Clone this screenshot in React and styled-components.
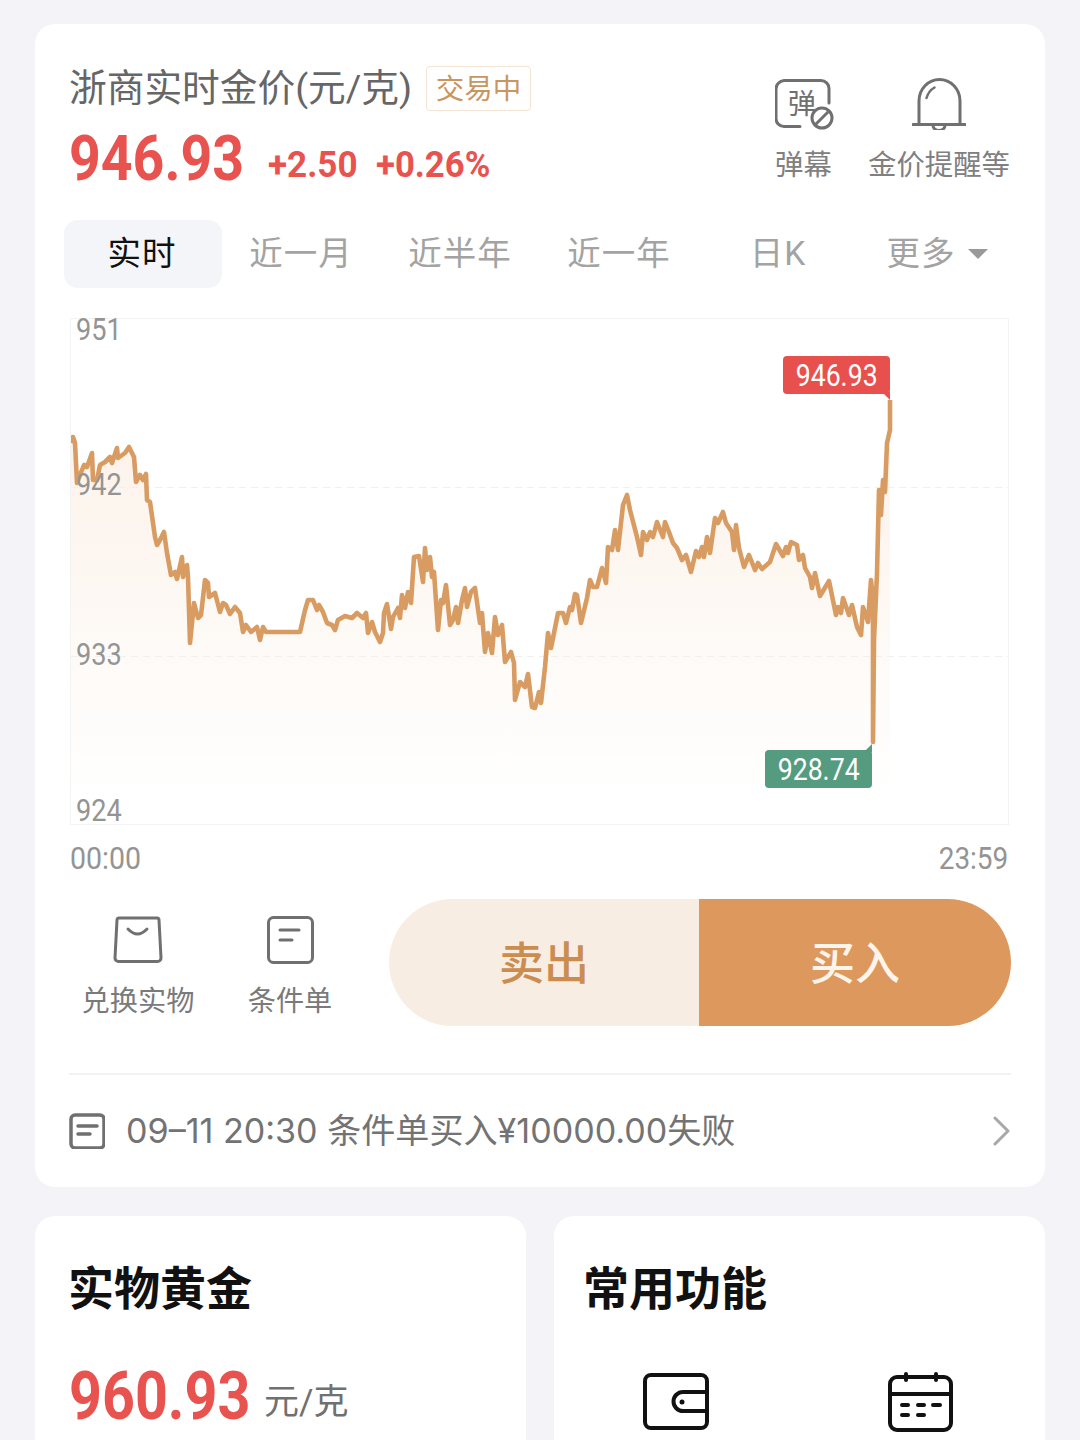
import styled, { createGlobalStyle } from "styled-components"

const GlobalStyle = createGlobalStyle`
html, body {
  margin: 0;
  padding: 0;
  height: 1440px;
  overflow: hidden;
  background: #f3f3f8;
  font-family: "Roboto", "Noto Sans CJK SC", sans-serif;
}
`

const CJK = `"Roboto", "Noto Sans CJK SC", sans-serif`

// 分时线 (page coordinates)
const line = [
  [71,443],[73,437],[75,443],[77,483],[80,475],[84,465],[87,467],[92,453],[93,480],[97,480],[100,465],[105,462],[110,457],[112,463],[117,448],[118,458],[125,453],[129,447],[134,457],[136,482],[140,475],[143,480],[146,474],[147,500],[150,502],[155,537],[157,545],[160,540],[164,532],[167,553],[171,575],[175,572],[177,579],[182,557],[183,577],[187,565],[188,577],[190,643],[194,603],[198,618],[201,615],[205,580],[208,583],[209,597],[215,593],[220,612],[223,603],[226,605],[230,614],[235,607],[240,613],[243,632],[246,625],[251,632],[257,627],[260,640],[263,627],[266,632],[300,632],[305,610],[308,600],[313,600],[317,610],[319,605],[323,612],[327,623],[332,625],[335,630],[338,620],[345,616],[352,618],[357,613],[363,618],[366,613],[368,633],[372,622],[375,632],[380,642],[383,633],[384,613],[387,604],[391,629],[393,617],[398,608],[400,618],[402,595],[405,608],[408,592],[411,603],[414,557],[419,556],[423,582],[425,548],[427,570],[430,557],[432,577],[434,572],[438,630],[441,600],[443,603],[446,585],[450,625],[453,620],[456,607],[458,623],[462,600],[465,588],[467,607],[471,592],[475,588],[480,623],[482,613],[485,652],[488,633],[492,653],[495,617],[498,635],[502,625],[505,662],[511,652],[514,663],[515,700],[520,682],[525,687],[528,674],[532,707],[535,708],[539,692],[541,703],[545,667],[548,633],[551,648],[558,613],[563,613],[566,623],[570,607],[572,610],[575,594],[577,595],[581,623],[587,598],[590,580],[593,587],[597,587],[602,568],[606,583],[608,547],[612,550],[615,530],[618,550],[623,505],[627,495],[630,510],[637,537],[641,555],[643,532],[647,540],[650,532],[653,537],[657,522],[663,537],[665,522],[669,532],[673,543],[677,548],[682,560],[686,555],[691,572],[696,551],[699,557],[702,547],[704,557],[707,537],[710,553],[715,518],[718,523],[723,512],[726,523],[732,532],[734,550],[736,525],[739,548],[744,567],[749,555],[755,570],[758,563],[762,569],[770,562],[776,544],[783,556],[786,547],[788,553],[791,542],[797,545],[799,560],[803,555],[805,568],[810,577],[812,588],[815,573],[820,596],[829,581],[836,615],[838,607],[841,613],[843,598],[849,615],[852,605],[857,627],[861,635],[863,607],[868,622],[871,580],[873,600],[873,742],[874,640],[877,573],[879,490],[881,515],[883,480],[885,492],[887,443],[890,430],[890,400],
]
const linePts = line.map((p) => p.join(",")).join(" ")
const areaPts = `71,824 ${linePts} 890,824`

const Page = styled.div`
padding: 24px 35px 0;
box-sizing: border-box;
height: 1440px;
overflow: hidden;
`

const MainCard = styled.section`
background: #fff;
border-radius: 20px;
padding: 40px 34px 0;
height: 1163px;
box-sizing: border-box;
`

const Header = styled.header`
display: flex;
justify-content: space-between;
height: 156px;
`

const HeaderLeft = styled.div`
display: flex;
flex-direction: column;
`

const TitleRow = styled.div`
display: flex;
align-items: center;
height: 48px;
`

const Title = styled.span`
font-size: 37.7px;
color: #666;
font-family: ${CJK};
white-space: nowrap;
padding-bottom: 7px;
`

const StatusTag = styled.span`
margin-left: 14px;
width: 105px;
height: 45px;
box-sizing: border-box;
border: 1.5px solid #f3e4d4;
border-radius: 4px;
color: #c9965f;
font-size: 28.5px;
padding-bottom: 4px;
display: flex;
align-items: center;
justify-content: center;
`

const PriceRow = styled.div`
display: flex;
align-items: flex-end;
margin-top: 14px;
height: 66px;
color: #e8524f;
font-weight: 700;
`

// 原图数字是窄体，这里用 scaleX 收窄
const Condensed = styled.span`
display: inline-block;
white-space: nowrap;
width: ${(p) => (p.$w ? `${p.$w}px` : "auto")};
transform: scaleX(${(p) => p.$sx});
transform-origin: ${(p) => p.$origin || "left"} center;
`

const BigPrice = styled(Condensed)`
font-size: 63px;
line-height: 66px;
`

const Change = styled(Condensed)`
font-size: 36.5px;
line-height: 40px;
margin-left: ${(p) => p.$gap}px;
margin-bottom: 7px;
`

const HeaderRight = styled.div`
display: flex;
gap: 31px;
margin-right: 1px;
`

const HeaderAction = styled.div`
display: flex;
flex-direction: column;
align-items: ${(p) => p.$align || "center"};
color: #808080;
font-size: 28.4px;
`

const ActionIcon = styled.svg`
display: block;
margin-top: 14px;
margin-bottom: 17px;
`

const ActionLabel = styled.span`
line-height: 38px;
white-space: nowrap;
`

const Tabs = styled.nav`
display: grid;
grid-template-columns: repeat(6, 159px);
margin-left: -5px;
height: 68px;
`

const Tab = styled.div`
display: flex;
align-items: center;
justify-content: center;
gap: 12px;
font-size: 33.5px;
letter-spacing: 1px;
color: ${(p) => (p.$active ? "#111" : "#a3a3a3")};
background: ${(p) => (p.$active ? "#f4f5f9" : "transparent")};
border-radius: 14px;
width: 158px;
box-sizing: border-box;
padding: 0 2px 7px 0;
`

const Caret = styled.i`
width: 0;
height: 0;
border-left: 10px solid transparent;
border-right: 10px solid transparent;
border-top: 10px solid #999;
margin-top: 7px;
`

const Chart = styled.div`
position: relative;
margin: 30px 2px 0 1px;
height: 507px;
box-sizing: border-box;
border: 1px solid #f3f3f3;
`

const ChartSvg = styled.svg`
display: block;
width: 100%;
height: 100%;
`

const AxisLabel = styled(Condensed)`
position: absolute;
left: 5px;
top: ${(p) => p.$top}px;
font-size: 31px;
line-height: 36px;
color: #949494;
`

const PriceTag = styled.div`
position: absolute;
left: ${(p) => p.$left}px;
top: ${(p) => p.$top}px;
width: 107px;
height: 38px;
border-radius: 4px;
background: ${(p) => p.$color};
color: #fff;
font-size: 31px;
display: flex;
align-items: center;
justify-content: center;

&::after {
  content: "";
  position: absolute;
  right: 0;
  width: 8px;
  height: 8px;
  background: ${(p) => p.$color};
  ${(p) => (p.$up
    ? "top: -6px; clip-path: polygon(100% 0, 100% 100%, 0 100%);"
    : "bottom: -6px; clip-path: polygon(0 0, 100% 0, 100% 100%);")}
}
`

const TimeRow = styled.div`
display: flex;
justify-content: space-between;
margin: 18px 3px 0 1px;
height: 32px;
line-height: 32px;
font-size: 31px;
color: #949494;
`

const ActionRow = styled.div`
display: flex;
align-items: flex-start;
margin-top: 24px;
height: 127px;
`

const QuickAction = styled.div`
width: ${(p) => p.$w}px;
display: flex;
flex-direction: column;
align-items: center;
color: #7a7a7a;
font-size: 28.2px;
`

const QuickIcon = styled.svg`
display: block;
margin-top: 17px;
margin-bottom: 17px;
`

const QuickLabel = styled.span`
line-height: 42px;
white-space: nowrap;
`

const TradeButtons = styled.div`
display: flex;
width: 622px;
height: 127px;
margin-left: auto;
border-radius: 64px;
overflow: hidden;
`

const TradeButton = styled.button`
border: 0;
padding: 0 0 5px;
width: ${(p) => p.$w}px;
background: ${(p) => p.$bg};
color: ${(p) => p.$color};
font-family: ${CJK};
font-size: 45px;
font-weight: 500;
`

const Divider = styled.div`
margin-top: 47px;
height: 2px;
background: #f2f2f2;
`

const NoticeRow = styled.div`
display: flex;
align-items: center;
height: 112px;
`

const NoticeText = styled.span`
margin-left: 21px;
font-family: "Inter", "Noto Sans CJK SC", sans-serif;
font-size: 34.1px;
color: #737373;
white-space: nowrap;
flex: 1;
padding-bottom: 7px;
`

const BottomRow = styled.div`
display: grid;
grid-template-columns: 491px 491px;
gap: 28px;
margin-top: 29px;
`

const SmallCard = styled.section`
background: #fff;
border-radius: 20px 20px 0 0;
height: 300px;
padding: 44px 31px 0 ${(p) => p.$left}px;
box-sizing: border-box;
`

const CardTitle = styled.h2`
margin: 0;
font-size: 46px;
line-height: 58px;
font-weight: 700;
color: #111;
`

const GoldRow = styled.div`
display: flex;
align-items: flex-end;
margin-top: 41px;
margin-left: 1px;
`

const GoldPrice = styled(Condensed)`
font-weight: 700;
font-size: 66px;
line-height: 76px;
color: #e8524f;
`

const GoldUnit = styled.span`
margin-left: 14px;
margin-bottom: 12px;
font-size: 35px;
line-height: 40px;
color: #707070;
`

const FuncIcons = styled.div`
display: flex;
gap: 179px;
margin-top: 54px;
margin-left: 60px;
`

export default function App() {
  return (
    <>
      <GlobalStyle />
      <Page>
        <MainCard>
          <Header>
            <HeaderLeft>
              <TitleRow>
                <Title>浙商实时金价(元/克)</Title>
                <StatusTag>交易中</StatusTag>
              </TitleRow>
              <PriceRow>
                <BigPrice $w={174} $sx={0.88}>946.93</BigPrice>
                <Change $w={88} $sx={0.96} $gap={25}>+2.50</Change>
                <Change $w={112} $sx={0.95} $gap={20}>+0.26%</Change>
              </PriceRow>
            </HeaderLeft>
            <HeaderRight>
              <HeaderAction $align="flex-start">
                <ActionIcon width="62" height="52" viewBox="775 79 62 52" fill="none" stroke="#707070" strokeWidth="3">
                  <path d="M800 127.5H784a8 8 0 0 1-8-8V90a8.500 8.500 0 0 1 8-8.500h37a8 8 0 0 1 8 8V104" strokeLinecap="round" />
                  <text x="802" y="115" fontSize="28" fill="#707070" stroke="none" textAnchor="middle" fontFamily="Noto Sans CJK SC">弹</text>
                  <circle cx="822" cy="119" r="10" />
                  <path d="M815 126l14-14" />
                </ActionIcon>
                <ActionLabel>弹幕</ActionLabel>
              </HeaderAction>
              <HeaderAction>
                <ActionIcon width="54" height="52" viewBox="912 79 54 52" fill="none" stroke="#707070" strokeWidth="3">
                  <path d="M919 125V102a20.500 21.500 0 0 1 41 0v23" />
                  <path d="M913 125.500h52" strokeLinecap="round" />
                  <path d="M933 126.500a6 5 0 0 0 12 0" />
                  <path d="M926.500 99q2-7 8-10.500" strokeLinecap="round" strokeWidth="2.500" />
                </ActionIcon>
                <ActionLabel>金价提醒等</ActionLabel>
              </HeaderAction>
            </HeaderRight>
          </Header>

          <Tabs>
            <Tab $active>实时</Tab>
            <Tab>近一月</Tab>
            <Tab>近半年</Tab>
            <Tab>近一年</Tab>
            <Tab>日K</Tab>
            <Tab>更多<Caret /></Tab>
          </Tabs>

          <Chart>
            <ChartSvg viewBox="71 319 937 505" preserveAspectRatio="none">
              <defs>
                <linearGradient id="goldFill" x1="0" y1="400" x2="0" y2="800" gradientUnits="userSpaceOnUse">
                  <stop offset="0" stopColor="#f6d9c0" stopOpacity="0.36" />
                  <stop offset="1" stopColor="#f6d9c0" stopOpacity="0" />
                </linearGradient>
              </defs>
              <polygon points={areaPts} fill="url(#goldFill)" />
              <line x1="71" y1="487.500" x2="1008" y2="487.500" stroke="#f0f0f0" strokeDasharray="7 5" />
              <line x1="71" y1="656.500" x2="1008" y2="656.500" stroke="#f0f0f0" strokeDasharray="7 5" />
              <polyline points={linePts} fill="none" stroke="#d89c62" strokeWidth="4.600" strokeLinejoin="round" />
            </ChartSvg>
            <AxisLabel $sx={0.875} $top={-7}>951</AxisLabel>
            <AxisLabel $sx={0.875} $top={148}>942</AxisLabel>
            <AxisLabel $sx={0.875} $top={318}>933</AxisLabel>
            <AxisLabel $sx={0.875} $top={474}>924</AxisLabel>
            <PriceTag $left={712} $top={37} $color="#e8504e"><Condensed $sx={0.86} $origin="center">946.93</Condensed></PriceTag>
            <PriceTag $left={694} $top={431} $color="#559b80" $up><Condensed $sx={0.86} $origin="center">928.74</Condensed></PriceTag>
          </Chart>

          <TimeRow>
            <Condensed $sx={0.92}>00:00</Condensed>
            <Condensed $sx={0.9} $origin="right">23:59</Condensed>
          </TimeRow>

          <ActionRow>
            <QuickAction $w={138}>
              <QuickIcon width="50" height="48" viewBox="114 916 50 48" fill="none" stroke="#707070" strokeWidth="3" strokeLinejoin="round">
                <path d="M120 918h38a2 2 0 0 1 2 2l2 38a3.500 3.500 0 0 1-3.500 3.500h-39a3.500 3.500 0 0 1-3.500-3.500l2-38a2 2 0 0 1 2-2z" />
                <path d="M129 929q9.500 10 19 0" strokeLinecap="round" />
              </QuickIcon>
              <QuickLabel>兑换实物</QuickLabel>
            </QuickAction>
            <QuickAction $w={166}>
              <QuickIcon width="48" height="48" viewBox="266 916 48 48" fill="none" stroke="#707070" strokeWidth="3" strokeLinecap="round">
                <rect x="268.500" y="917.500" width="44" height="45" rx="5" />
                <path d="M280 930h19M280 940h12" />
              </QuickIcon>
              <QuickLabel>条件单</QuickLabel>
            </QuickAction>
            <TradeButtons>
              <TradeButton $w={310} $bg="#f8ede3" $color="#cb8c50">卖出</TradeButton>
              <TradeButton $w={312} $bg="#dd995d" $color="#fdf5ec">买入</TradeButton>
            </TradeButtons>
          </ActionRow>

          <Divider />

          <NoticeRow>
            <svg width="36" height="36" viewBox="68 1113 36 36" fill="none" stroke="#707070" strokeWidth="3.500" strokeLinecap="round">
              <rect x="70" y="1115" width="33" height="33" rx="4" />
              <path d="M77 1126h19M77 1134h12" />
            </svg>
            <NoticeText>09–11 20:30 条件单买入¥10000.00失败</NoticeText>
            <svg width="18" height="30" viewBox="0 0 18 30" fill="none" stroke="#a8a8a8" strokeWidth="3" strokeLinecap="round" strokeLinejoin="round">
              <path d="M2 2l13 13L2 28" />
            </svg>
          </NoticeRow>
        </MainCard>

        <BottomRow>
          <SmallCard $left={33}>
            <CardTitle>实物黄金</CardTitle>
            <GoldRow>
              <GoldPrice $w={181} $sx={0.87}>960.93</GoldPrice>
              <GoldUnit>元/克</GoldUnit>
            </GoldRow>
          </SmallCard>
          <SmallCard $left={29}>
            <CardTitle>常用功能</CardTitle>
            <FuncIcons>
              <svg width="66" height="58" viewBox="644 1372 66 58" fill="none" stroke="#111" strokeWidth="4">
                <rect x="646" y="1375" width="62" height="53" rx="6" />
                <path d="M708 1392h-24a9.500 9.500 0 0 0 0 19h24" />
                <circle cx="683" cy="1402" r="2.500" fill="#111" stroke="none" />
              </svg>
              <svg width="66" height="60" viewBox="889 1370 66 60" fill="none" stroke="#111" strokeWidth="4" strokeLinecap="round">
                <rect x="891" y="1375" width="61" height="53" rx="7" />
                <path d="M891 1392h61M907 1372v6M937 1372v6" />
                <path d="M903 1403h6M919 1403h6M934 1403h7M903 1413h6M919 1413h6" />
              </svg>
            </FuncIcons>
          </SmallCard>
        </BottomRow>
      </Page>
    </>
  )
}
